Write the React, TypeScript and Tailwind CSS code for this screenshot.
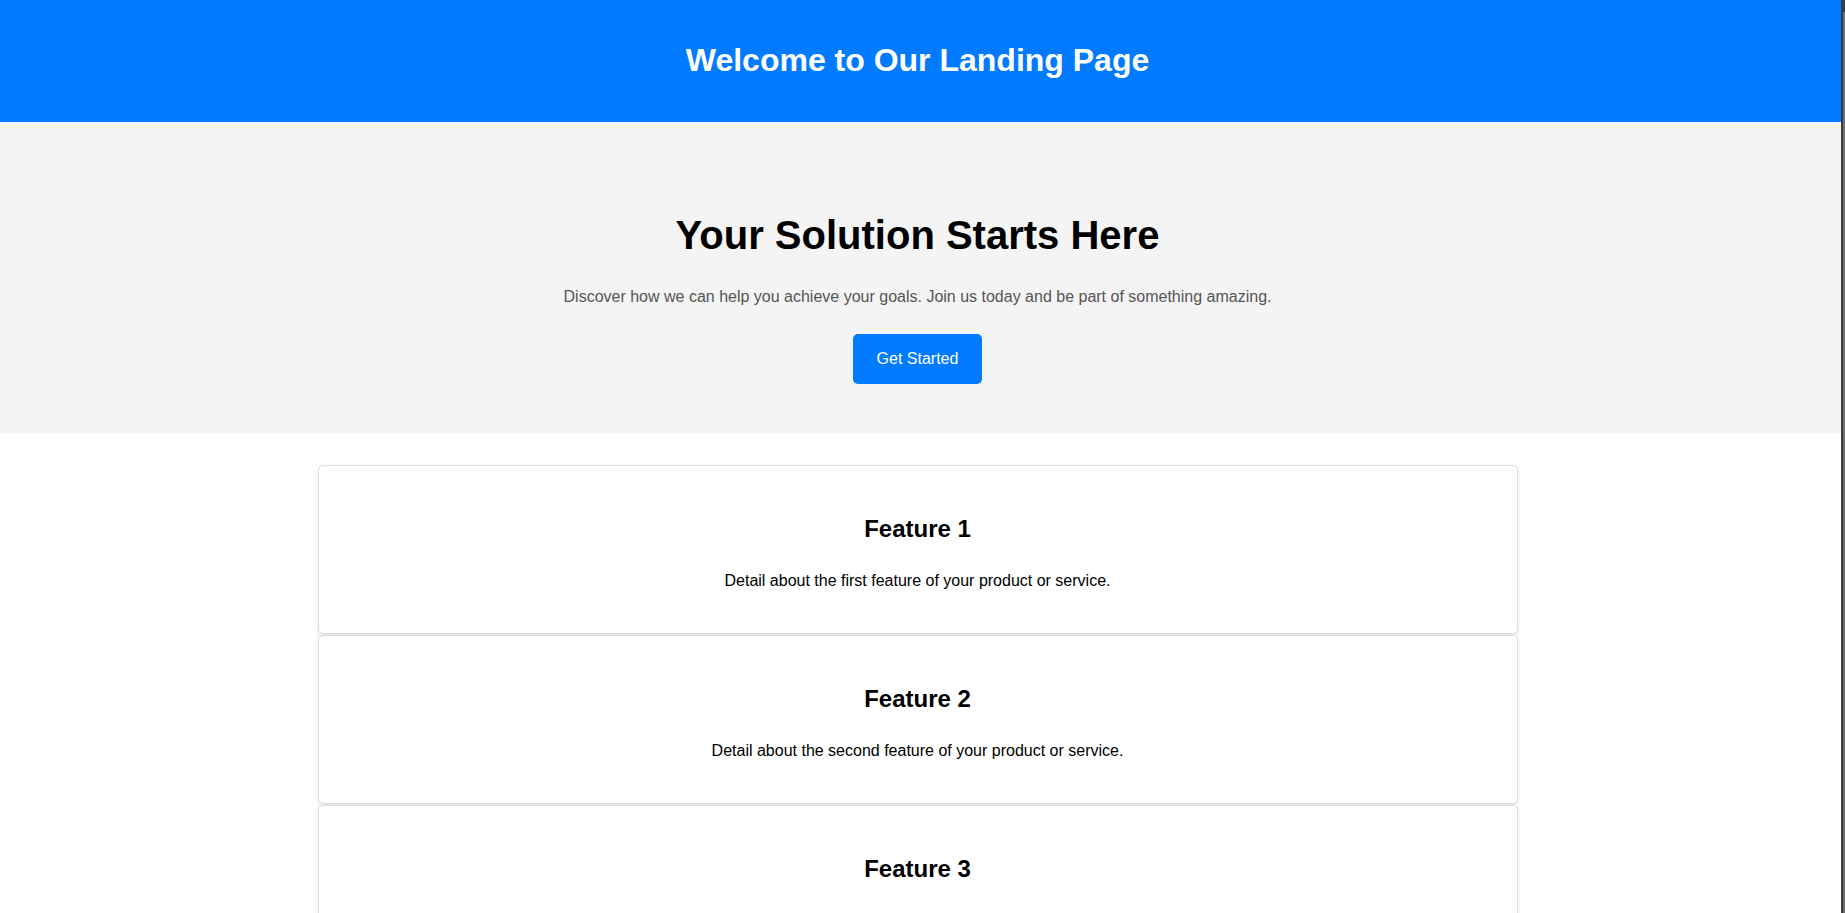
import React from "react";

const features = [
  { title: "Feature 1", text: "Detail about the first feature of your product or service." },
  { title: "Feature 2", text: "Detail about the second feature of your product or service." },
  { title: "Feature 3", text: "Detail about the third feature of your product or service." },
];

export default function App() {
  return (
    <div className="flex h-[913px] w-full overflow-hidden bg-white font-['Liberation_Sans',Arial,sans-serif]">
      <div className="flex-1 min-w-0 flex flex-col">
        <header className="h-[122px] shrink-0 bg-[#007bff] flex items-center justify-center pr-[6px] pb-[2px]">
          <h1 className="text-[32px] leading-[37px] font-bold text-white">Welcome to Our Landing Page</h1>
        </header>
        <section className="shrink-0 bg-[#f4f4f4] flex flex-col items-center pt-[90px] pb-[49px] pr-[6px]">
          <h2 className="text-[40px] leading-[46px] font-bold text-black">Your Solution Starts Here</h2>
          <p className="mt-[30px] text-[16px] leading-[18px] text-[#555555]">
            Discover how we can help you achieve your goals. Join us today and be part of something amazing.
          </p>
          <button className="mt-[28px] h-[50px] px-[24px] rounded-[5px] bg-[#007bff] text-white text-[16px] leading-[18px]">
            Get Started
          </button>
        </section>
        <section className="pt-[32px] pl-5 pr-[26px]">
          <div className="max-w-[1200px] mx-auto flex flex-col gap-[1px]">
            {features.map((f) => (
              <div
                key={f.title}
                className="h-[169px] shrink-0 border border-[#dddddd] rounded-[5px] bg-white shadow-[0_2px_4px_rgba(0,0,0,0.1)] flex flex-col items-center pt-[49px]"
              >
                <h3 className="text-[24px] leading-[28px] font-bold text-black">{f.title}</h3>
                <p className="mt-[29px] text-[16px] leading-[18px] text-black">{f.text}</p>
              </div>
            ))}
          </div>
        </section>
      </div>
      <div className="w-[4px] shrink-0 bg-[#3d3d3d] flex justify-end">
        <div className="w-[2px] mt-[12px] bg-[#6e6e6e]" />
      </div>
    </div>
  );
}
